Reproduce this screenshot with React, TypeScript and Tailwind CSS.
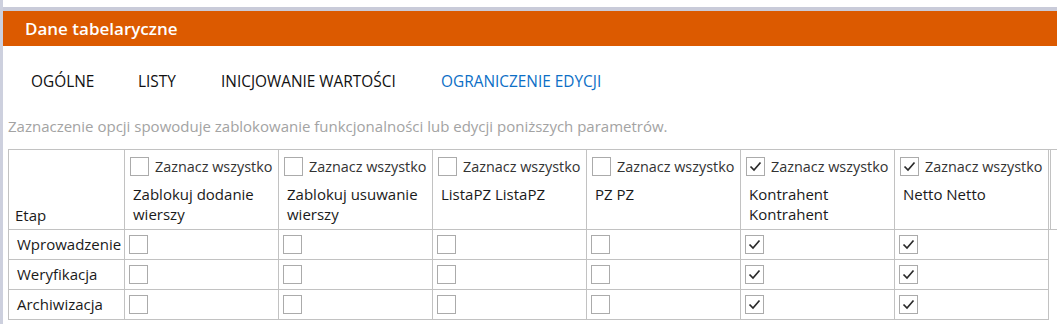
import React from "react";

const font = { fontFamily: '"Open Sans", "Noto Sans", sans-serif' };

function Box({ checked }: { checked?: boolean }) {
  return (
    <div className="w-[19px] h-[19px] border border-[#ababab] bg-white flex items-center justify-center shrink-0">
      {checked && (
        <svg width="17" height="17" viewBox="0 0 17 17">
          <path d="M3.5 8.5 L7 12 L13.5 4.5" fill="none" stroke="#2a2a2a" strokeWidth="1.7" />
        </svg>
      )}
    </div>
  );
}

const cols = [
  { label: "Zablokuj dodanie wierszy", checked: false },
  { label: "Zablokuj usuwanie wierszy", checked: false },
  { label: "ListaPZ ListaPZ", checked: false },
  { label: "PZ PZ", checked: false },
  { label: "Kontrahent Kontrahent", checked: true },
  { label: "Netto Netto", checked: true },
];

const rows = ["Wprowadzenie", "Weryfikacja", "Archiwizacja"];

export default function App() {
  return (
    <div className="w-[1057px] h-[324px] bg-white flex overflow-hidden" style={font}>
      <div className="w-[3px] bg-[#cdd0de] shrink-0" />
      <div className="flex-1 flex flex-col">
        <div className="h-[7px] bg-white" />
        <div className="h-[4px] bg-[#c9cbd9]" />
        <div className="h-[35px] bg-[#dc5a00] flex items-center pl-[22px]">
          <span className="text-white text-[17px] font-semibold">Dane tabelaryczne</span>
        </div>
        <div className="h-[72px] flex items-center pl-[5px] text-[15.4px] text-[#111]">
          <div className="w-[107px] pl-[23px]">OGÓLNE</div>
          <div className="w-[83px] pl-[23px]">LISTY</div>
          <div className="w-[220px] pl-[23px] whitespace-nowrap">INICJOWANIE WARTOŚCI</div>
          <div className="pl-[23px] text-[#0d6fc6]">OGRANICZENIE EDYCJI</div>
        </div>
        <div className="pl-[5px] text-[15px] text-[#a3a3a3] h-[20px] leading-[20px] -mt-[2px]">
          Zaznaczenie opcji spowoduje zablokowanie funkcjonalności lub edycji poniższych parametrów.
        </div>
        <div className="ml-[5px] mt-[13px] text-[15px] text-[#1a1a1a]">
          <div className="flex border-t border-b border-[#c2c2c2] h-[81px]">
            <div className="flex border-l border-[#c2c2c2]">
              <div className="w-[116px] border-r border-[#c2c2c2] flex items-end pl-[6px] pb-[4px] leading-[20px]">Etap</div>
              {cols.map((c, i) => (
                <div key={i} className="w-[154px] border-r border-[#c2c2c2] flex flex-col pt-[7px]">
                  <div className="flex items-center pl-[5px] gap-[6px] h-[19px]">
                    <Box checked={c.checked} />
                    <span className="text-[14.4px] text-[#333] whitespace-nowrap">Zaznacz wszystko</span>
                  </div>
                  <div className="pl-[8px] pr-[4px] mt-[8px] leading-[20px]">{c.label}</div>
                </div>
              ))}
            </div>
            <div className="w-[1px]" />
            <div className="flex-1 border-l border-[#c2c2c2]" />
          </div>
          <div className="w-[1041px] border-l border-[#c2c2c2]">
            {rows.map((r) => (
              <div key={r} className="flex h-[30px] border-b border-[#c2c2c2]">
                <div className="w-[116px] border-r border-[#c2c2c2] flex items-center pl-[8px] whitespace-nowrap">{r}</div>
                {cols.map((c, i) => (
                  <div key={i} className="w-[154px] border-r border-[#c2c2c2] pl-[4px] pt-[5px]">
                    <Box checked={c.checked} />
                  </div>
                ))}
              </div>
            ))}
          </div>
        </div>
      </div>
    </div>
  );
}
